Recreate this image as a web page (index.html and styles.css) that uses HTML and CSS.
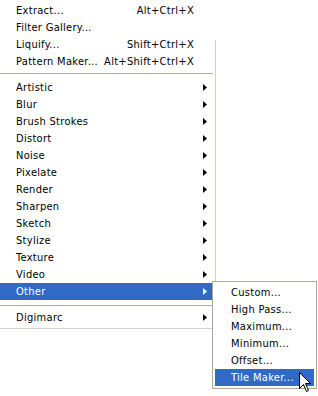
FILE: index.html
```html
<!DOCTYPE html>
<html lang="en">
<head>
  <meta charset="UTF-8">
  <title>Filter Menu</title>
  <link rel="stylesheet" href="styles.css">
</head>
<body>

  <div class="menu">
    <div class="item"><span class="label">Extract...</span><span class="key">Alt+Ctrl+X</span></div>
    <div class="item"><span class="label">Filter Gallery...</span></div>
    <div class="item"><span class="label">Liquify...</span><span class="key">Shift+Ctrl+X</span></div>
    <div class="item"><span class="label">Pattern Maker...</span><span class="key">Alt+Shift+Ctrl+X</span></div>
    <div class="sep"></div>
    <div class="item"><span class="label">Artistic</span><span class="arrow"></span></div>
    <div class="item"><span class="label">Blur</span><span class="arrow"></span></div>
    <div class="item"><span class="label">Brush Strokes</span><span class="arrow"></span></div>
    <div class="item"><span class="label">Distort</span><span class="arrow"></span></div>
    <div class="item"><span class="label">Noise</span><span class="arrow"></span></div>
    <div class="item"><span class="label">Pixelate</span><span class="arrow"></span></div>
    <div class="item"><span class="label">Render</span><span class="arrow"></span></div>
    <div class="item"><span class="label">Sharpen</span><span class="arrow"></span></div>
    <div class="item"><span class="label">Sketch</span><span class="arrow"></span></div>
    <div class="item"><span class="label">Stylize</span><span class="arrow"></span></div>
    <div class="item"><span class="label">Texture</span><span class="arrow"></span></div>
    <div class="item"><span class="label">Video</span><span class="arrow"></span></div>
    <div class="item active"><span class="label">Other</span><span class="arrow"></span></div>
    <div class="sep sep-low"></div>
    <div class="item"><span class="label">Digimarc</span><span class="arrow"></span></div>
  </div>

  <!-- submenu of "Other" -->
  <div class="submenu">
    <div class="item"><span class="label">Custom...</span></div>
    <div class="item"><span class="label">High Pass...</span></div>
    <div class="item"><span class="label">Maximum...</span></div>
    <div class="item"><span class="label">Minimum...</span></div>
    <div class="item"><span class="label">Offset...</span></div>
    <div class="item active"><span class="label">Tile Maker...</span></div>
  </div>

  <svg class="cursor" width="13" height="21" viewBox="0 0 13 21">
    <path d="M0.5 0.5V16.5L4.5 12.5L7.5 19.5L9.5 18.5L6.5 11.5H11.5Z" fill="#fff" stroke="#000" stroke-width="1"/>
  </svg>

</body>
</html>
```

FILE: styles.css
```css
body {
  margin: 0;
  background: #ffffff;
  color: #000000;
  font-family: "DejaVu Sans Condensed", "Liberation Sans", sans-serif;
  font-size: 11px;
  letter-spacing: 0.3px;
  overflow: hidden;
}

.menu {
  position: relative;
  width: 213px;
  margin: -1px 0 0 -3px;
  padding: 2px 3px 2px 2px;
  border: 1px solid #d4d0c8;
  border-right: none;
}

/* right edge only shows from here down */
.menu::after {
  content: "";
  position: absolute;
  right: 0;
  top: 40px;
  bottom: 0;
  width: 1px;
  background: #d4d0c8;
}

.item {
  display: flex;
  align-items: center;
  height: 17px;
  padding: 0 6px 0 16px;
  white-space: nowrap;
}

.label {
  flex: 1;
}

.key {
  margin-right: 13px;
}

.arrow {
  width: 4px;
  height: 7px;
  background: currentColor;
  clip-path: polygon(0 0, 100% 50%, 0 100%);
}

.item.active {
  background: #316ac5;
  color: #ffffff;
}

.sep {
  height: 1px;
  margin: 3px 0 5px;
  background: #aca899;
}

.sep-low {
  margin: 5px 0 3px;
}

.submenu {
  position: absolute;
  left: 212px;
  top: 281px;
  width: 99px;
  padding: 2px;
  border: 1px solid #aca899;
  background: #ffffff;
}

.cursor {
  position: absolute;
  left: 299px;
  top: 372px;
}
```
